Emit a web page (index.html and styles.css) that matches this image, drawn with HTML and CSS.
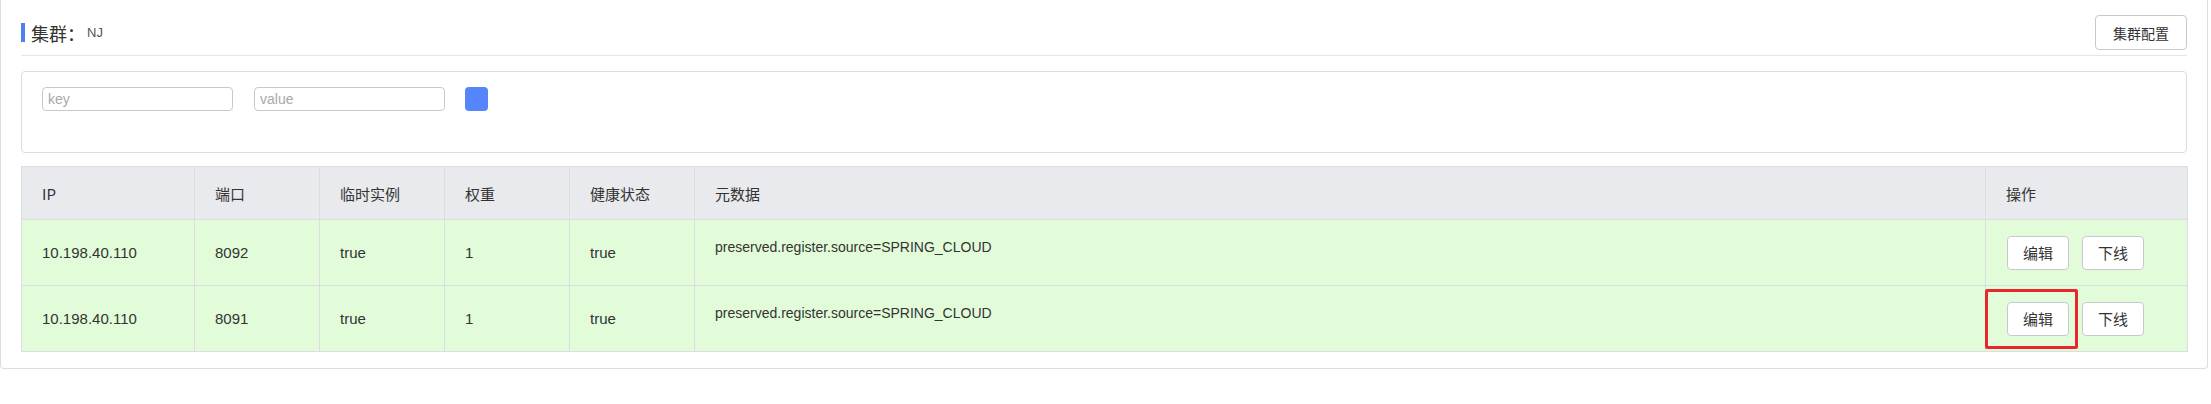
FILE: index.html
```html
<!DOCTYPE html>
<html lang="zh">
<head>
<meta charset="utf-8">
<title>集群</title>
<link rel="stylesheet" href="styles.css">
</head>
<body>
<div class="card">
  <div class="title-row">
    <div class="title">
      <span class="title-bar"></span>
      <span class="title-text">集群：</span>
      <span class="title-name">NJ</span>
    </div>
    <button class="btn btn-config">集群配置</button>
  </div>
  <div class="filter">
    <input class="filter-input" type="text" placeholder="key">
    <input class="filter-input" type="text" placeholder="value">
    <button class="btn-add"></button>
  </div>
  <table class="table">
    <colgroup>
      <col class="c-ip"><col class="c-port"><col class="c-eph"><col class="c-weight"><col class="c-health"><col class="c-meta"><col class="c-op">
    </colgroup>
    <thead>
      <tr>
        <th>IP</th><th>端口</th><th>临时实例</th><th>权重</th><th>健康状态</th><th>元数据</th><th>操作</th>
      </tr>
    </thead>
    <tbody>
      <tr>
        <td>10.198.40.110</td><td>8092</td><td>true</td><td>1</td><td>true</td>
        <td class="meta">preserved.register.source=SPRING_CLOUD</td>
        <td class="ops"><button class="btn btn-op">编辑</button><button class="btn btn-op">下线</button></td>
      </tr>
      <tr>
        <td>10.198.40.110</td><td>8091</td><td>true</td><td>1</td><td>true</td>
        <td class="meta">preserved.register.source=SPRING_CLOUD</td>
        <td class="ops"><span class="highlight"><button class="btn btn-op">编辑</button></span><button class="btn btn-op">下线</button></td>
      </tr>
    </tbody>
  </table>
</div>
</body>
</html>
```
FILE: styles.css
```css
* { box-sizing: border-box; }
html, body { margin: 0; padding: 0; background: #fff; }
body {
  font-family: "Liberation Sans", "Noto Sans CJK SC", sans-serif;
  color: #333;
}
.card {
  width: 2208px;
  border: 1px solid #dcdde2;
  border-top: 0;
  border-radius: 0 0 4px 4px;
  padding: 15px 20px 16px;
}
.title-row {
  display: flex;
  justify-content: space-between;
  align-items: center;
  padding-bottom: 5px;
  border-bottom: 1px solid #e6e6e8;
}
.title { display: flex; align-items: center; }
.title-bar {
  width: 4px;
  height: 19px;
  background: #4f7ff5;
  margin-right: 6px;
}
.title-text { font-size: 18px; color: #333; line-height: 20px; font-family: "Noto Sans CJK SC", sans-serif; }
.title-name { font-size: 13px; color: #555; margin-left: 2px; }
.btn {
  font-family: "Noto Sans CJK SC", sans-serif;
  background: #fff;
  border: 1px solid #c8c9cf;
  border-radius: 4px;
  color: #333;
  padding: 0;
  cursor: pointer;
}
.btn-config {
  width: 92px;
  height: 35px;
  font-size: 14px;
}
.filter {
  margin-top: 15px;
  height: 82px;
  border: 1px solid #dcdde2;
  border-radius: 4px;
  padding: 15px 20px;
  display: flex;
  align-items: flex-start;
  gap: 21px;
}
.filter-input {
  width: 191px;
  height: 24px;
  border: 1px solid #c8c9d0;
  border-radius: 4px;
  padding: 0 5px;
  font-family: "Liberation Sans", sans-serif;
  font-size: 14px;
  color: #333;
  outline: none;
}
.filter-input::placeholder { color: #a9a9a9; }
.btn-add {
  width: 23px;
  height: 24px;
  border: 0;
  border-radius: 4px;
  background: #5485fb;
  margin-left: -1px;
  padding: 0;
}
.table {
  margin-top: 13px;
  width: 2166px;
  border-collapse: collapse;
  table-layout: fixed;
  font-size: 15px;
}
.c-ip { width: 173px; }
.c-port, .c-eph, .c-weight, .c-health { width: 125px; }
.c-meta { width: 1291px; }
.c-op { width: 202px; }
.table th, .table td {
  box-sizing: content-box;
  border: 1px solid #dcdde0;
  text-align: left;
  padding: 0 20px;
  font-weight: normal;
}
.table th {
  background: #e9eaee;
  height: 52px;
  font-family: "Noto Sans CJK SC", sans-serif;
  font-size: 15px;
  color: #333;
}
.table td {
  background: #e2fcd9;
  height: 65px;
  color: #333;
}
.table td.meta {
  vertical-align: top;
  padding-top: 17px;
  height: 48px;
  font-size: 14px;
  line-height: 20px;
}
.table td.ops { padding-left: 21px; }
.btn-op {
  width: 62px;
  height: 34px;
  font-size: 15px;
  vertical-align: middle;
}
.btn-op + .btn-op, .highlight + .btn-op { margin-left: 13px; }
.highlight {
  position: relative;
  display: inline-block;
  vertical-align: middle;
}
.highlight .btn-op { display: block; }
.highlight::after {
  content: "";
  position: absolute;
  left: -22px;
  right: -9px;
  top: -13px;
  bottom: -13px;
  border: 3px solid #e8262b;
  border-radius: 2px;
  pointer-events: none;
}
```
